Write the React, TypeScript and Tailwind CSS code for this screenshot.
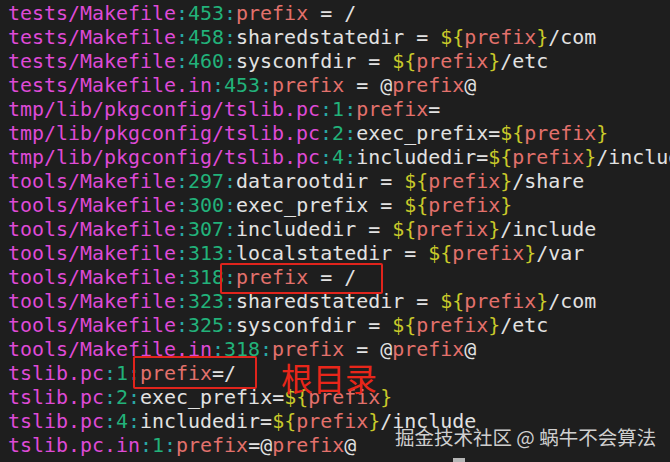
import React from "react";

type Line = { file: string; num: string; body: string };

const lines: Line[] = [
  { file: "tests/Makefile", num: "448", body: "localstatedir = ${prefix}/var" },
  { file: "tests/Makefile", num: "453", body: "prefix = /" },
  { file: "tests/Makefile", num: "458", body: "sharedstatedir = ${prefix}/com" },
  { file: "tests/Makefile", num: "460", body: "sysconfdir = ${prefix}/etc" },
  { file: "tests/Makefile.in", num: "453", body: "prefix = @prefix@" },
  { file: "tmp/lib/pkgconfig/tslib.pc", num: "1", body: "prefix=" },
  { file: "tmp/lib/pkgconfig/tslib.pc", num: "2", body: "exec_prefix=${prefix}" },
  { file: "tmp/lib/pkgconfig/tslib.pc", num: "4", body: "includedir=${prefix}/include" },
  { file: "tools/Makefile", num: "297", body: "datarootdir = ${prefix}/share" },
  { file: "tools/Makefile", num: "300", body: "exec_prefix = ${prefix}" },
  { file: "tools/Makefile", num: "307", body: "includedir = ${prefix}/include" },
  { file: "tools/Makefile", num: "313", body: "localstatedir = ${prefix}/var" },
  { file: "tools/Makefile", num: "318", body: "prefix = /" },
  { file: "tools/Makefile", num: "323", body: "sharedstatedir = ${prefix}/com" },
  { file: "tools/Makefile", num: "325", body: "sysconfdir = ${prefix}/etc" },
  { file: "tools/Makefile.in", num: "318", body: "prefix = @prefix@" },
  { file: "tslib.pc", num: "1", body: "prefix=/" },
  { file: "tslib.pc", num: "2", body: "exec_prefix=${prefix}" },
  { file: "tslib.pc", num: "4", body: "includedir=${prefix}/include" },
  { file: "tslib.pc.in", num: "1", body: "prefix=@prefix@" },
];

function Body({ text }: { text: string }) {
  const parts = text.split(/(\$\{|\}|prefix)/).filter((p) => p !== "");
  let prev = "";
  return (
    <>
      {parts.map((p, i) => {
        let cls = "text-[#e2e2e2]";
        if (p === "${" || p === "}") cls = "text-[#c9c92a]";
        else if (p === "prefix" && !prev.endsWith("_")) cls = "text-[#e3716c]";
        prev = p;
        return (
          <span key={i} className={cls}>
            {p}
          </span>
        );
      })}
    </>
  );
}

export default function App() {
  return (
    <div className="relative w-[670px] h-[462px] overflow-hidden bg-[#1e1e1e]">
      <div
        className="flex flex-col pl-[8px] -mt-[23px] text-[19.95px] leading-[24px] whitespace-pre"
        style={{ fontFamily: '"DejaVu Sans Mono", "Liberation Mono", monospace' }}
      >
        {lines.map((l, i) => (
          <div key={i} className="h-[24px]">
            <span className="text-[#df4ad6]">{l.file}</span>
            <span className="text-[#2aa7a4]">:</span>
            <span className="text-[#22b27a]">{l.num}</span>
            <span className="text-[#2aa7a4]">:</span>
            <Body text={l.body} />
          </div>
        ))}
      </div>

      {/* annotation boxes */}
      <div className="absolute left-[220px] top-[263px] w-[163px] h-[31px] border-2 border-[#e0241c] rounded-[2px]" />
      <div className="absolute left-[133px] top-[356px] w-[124px] h-[33px] border-2 border-[#e0241c] rounded-[2px]" />
      <div
        className="absolute left-[281px] top-[357px] text-[32px] leading-[40px] text-[#e8261a]"
        style={{ fontFamily: '"Noto Sans CJK SC", sans-serif' }}
      >
        根目录
      </div>

      {/* watermark */}
      <div
        className="absolute left-[395px] top-[424px] text-[19.5px] leading-[26px] text-[#cfcfcf] whitespace-nowrap"
        style={{ fontFamily: '"Noto Sans CJK SC", sans-serif' }}
      >
        掘金技术社区 @ 蜗牛不会算法
      </div>

      {/* cursor */}
      <div className="absolute left-[453px] top-[458px] w-[12px] h-[4px] bg-[#b5b5b5]" />
    </div>
  );
}
